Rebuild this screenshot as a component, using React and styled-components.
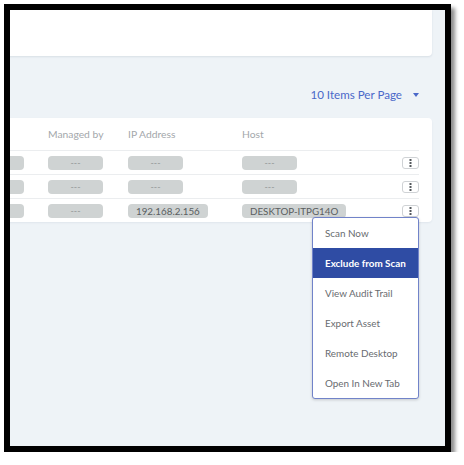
import React from "react";
import styled, { createGlobalStyle } from "styled-components";

const Global = createGlobalStyle`
  html, body { margin: 0; padding: 0; background: #ffffff; }
  body { font-family: Lato, "Noto Sans", sans-serif; }
`;

const Frame = styled.div`
  margin: 4px 0 0 4px;
  width: 435px;
  height: 436px;
  border: 6px solid #000;
  box-shadow: 4px 4px 4px rgba(0, 0, 0, 0.45);
  background: #eef3f7;
  overflow: hidden;
  display: flex;
  flex-direction: column;
`;

const TopCard = styled.div`
  height: 46px;
  margin-right: 13px;
  margin-left: -20px;
  flex-shrink: 0;
  background: #fff;
  border-radius: 0 0 4px 0;
  box-shadow: 0 1px 2px rgba(60, 80, 110, 0.12);
`;

const PagerRow = styled.div`
  height: 62px;
  flex-shrink: 0;
  display: flex;
  justify-content: flex-end;
  align-items: flex-end;
  padding: 0 26px 16px 0;
  box-sizing: border-box;
`;

const PagerLabel = styled.span`
  font-size: 11.6px;
  line-height: 14px;
  color: #4a68c9;
`;

const Caret = styled.span`
  width: 0;
  height: 0;
  margin: 0 0 5px 11px;
  border-left: 3px solid transparent;
  border-right: 3px solid transparent;
  border-top: 4px solid #4a68c9;
`;

const TableCard = styled.div`
  margin: 0 13px 0 -60px;
  background: #fff;
  border-radius: 4px;
  display: grid;
  grid-template-columns: 79px 80px 114px 1fr 17px;
  padding: 0 13px 0 19px;
  box-shadow: 0 1px 2px rgba(60, 80, 110, 0.08);
`;

const Cell = styled.div`
  height: ${(p) => (p.$head ? "32px" : "23px")};
  display: flex;
  align-items: center;
  justify-content: ${(p) => (p.$end ? "flex-end" : "flex-start")};
  border-bottom: ${(p) => (p.$last ? "none" : "1px solid #ebedef")};
  position: relative;
`;

const HeadText = styled.span`
  font-size: 10.3px;
  color: #a3a7ab;
`;

const Pill = styled.span`
  min-width: 55px;
  height: 14px;
  box-sizing: border-box;
  padding: 0 8px;
  border-radius: 4px;
  background: #cfd3d3;
  display: inline-flex;
  align-items: center;
  justify-content: center;
  font-size: ${(p) => (p.$empty ? "9px" : "9.8px")};
  color: ${(p) => (p.$empty ? "#959a9a" : "#5a5e60")};
  white-space: nowrap;
`;

const Kebab = styled.button`
  width: 17px;
  height: 12px;
  padding: 0;
  border: 1px solid #cfd2d5;
  border-radius: 3px;
  background: #fff;
  display: flex;
  align-items: center;
  justify-content: center;
  position: relative;
`;

const Menu = styled.div`
  position: absolute;
  top: 11px;
  right: -1px;
  width: 107px;
  background: #fff;
  border: 1px solid #7183c9;
  border-radius: 3px;
  box-shadow: 0 1px 3px rgba(0, 0, 0, 0.18);
  overflow: hidden;
  z-index: 5;
  box-sizing: border-box;
  text-align: left;
`;

const MenuItem = styled.div`
  height: 30px;
  display: flex;
  align-items: center;
  padding-left: 12px;
  font-family: Lato, "Noto Sans", sans-serif;
  font-size: 9.9px;
  white-space: nowrap;
  color: ${(p) => (p.$active ? "#fff" : "#686b6f")};
  font-weight: ${(p) => (p.$active ? 700 : 400)};
  background: ${(p) => (p.$active ? "#2f4ca4" : "transparent")};
`;

const Dots = () => (
  <svg width="3" height="8" viewBox="0 0 3 8">
    <rect x="0.5" y="0" width="2" height="2" fill="#55595d" />
    <rect x="0.5" y="3" width="2" height="2" fill="#55595d" />
    <rect x="0.5" y="6" width="2" height="2" fill="#55595d" />
  </svg>
);

const rows = [
  { managed: "---", ip: "---", host: "---" },
  { managed: "---", ip: "---", host: "---" },
  { managed: "---", ip: "192.168.2.156", host: "DESKTOP-ITPG14O", menu: true },
];

const menuItems = [
  "Scan Now",
  "Exclude from Scan",
  "View Audit Trail",
  "Export Asset",
  "Remote Desktop",
  "Open In New Tab",
];

const Value = ({ v }) => <Pill $empty={v === "---"}>{v}</Pill>;

export default function App() {
  return (
    <>
      <Global />
      <Frame>
        <TopCard />
        <PagerRow>
          <PagerLabel>10 Items Per Page</PagerLabel>
          <Caret />
        </PagerRow>
        <TableCard>
          <Cell $head />
          <Cell $head><HeadText>Managed by</HeadText></Cell>
          <Cell $head><HeadText>IP Address</HeadText></Cell>
          <Cell $head><HeadText>Host</HeadText></Cell>
          <Cell $head />
          {rows.map((r, i) => {
            const last = i === rows.length - 1;
            return (
              <React.Fragment key={i}>
                <Cell $last={last}><Pill $empty /></Cell>
                <Cell $last={last}><Value v={r.managed} /></Cell>
                <Cell $last={last}><Value v={r.ip} /></Cell>
                <Cell $last={last}><Value v={r.host} /></Cell>
                <Cell $last={last} $end>
                  <Kebab aria-label="More actions">
                    <Dots />
                    {r.menu && (
                      <Menu>
                        {menuItems.map((m) => (
                          <MenuItem key={m} $active={m === "Exclude from Scan"}>
                            {m}
                          </MenuItem>
                        ))}
                      </Menu>
                    )}
                  </Kebab>
                </Cell>
              </React.Fragment>
            );
          })}
        </TableCard>
      </Frame>
    </>
  );
}
